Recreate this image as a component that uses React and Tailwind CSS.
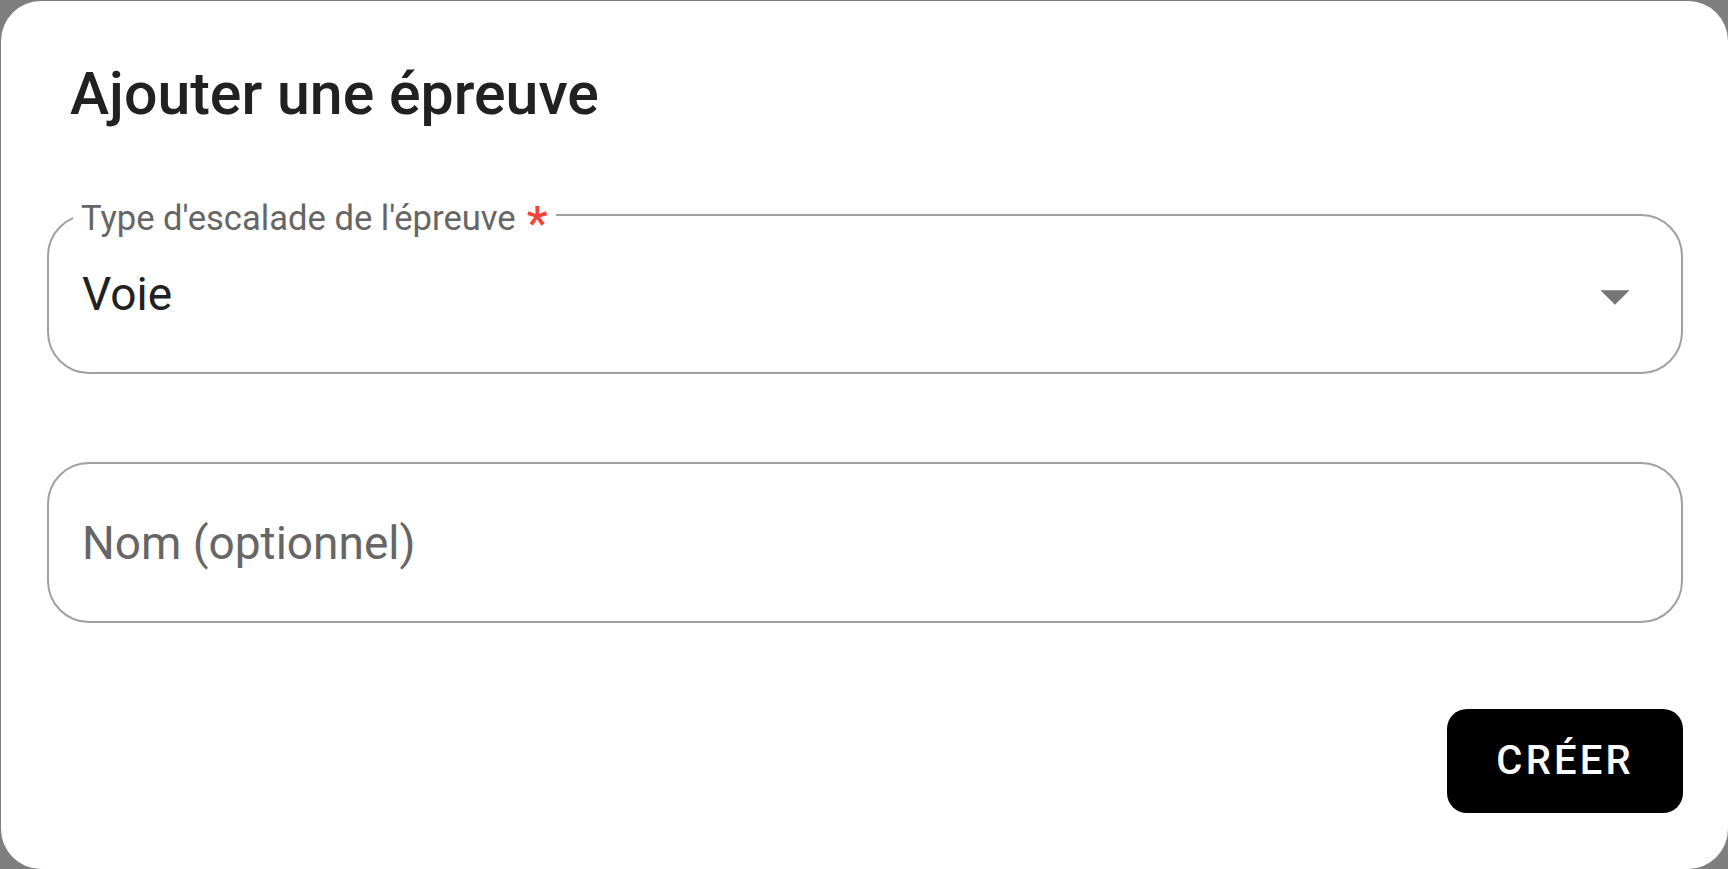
import { useState } from 'react';

function ArrowDrop() {
    return (
        <svg width="70" height="70" viewBox="0 0 24 24" className="shrink-0 text-[#757575] mt-[3px]">
            <path d="M7 10l5 5 5-5z" fill="currentColor" />
        </svg>
    );
}

export default function App() {
    const [name, setName] = useState('');

    return (
        <div className="h-[869px] w-full bg-[#7f7f7f] pt-px pl-px flex font-['Roboto',sans-serif] overflow-hidden">
            <div className="flex-1 bg-white rounded-[40px] flex flex-col pl-[46px] pr-[45px] pt-[63px]">
                <h2 className="text-[59px] leading-none font-medium text-[#212121] pl-[23px]">
                    Ajouter une épreuve
                </h2>

                {/* type d'escalade */}
                <div className="relative mt-[91px] h-[160px] border-2 border-[#a0a0a0] rounded-[42px] flex items-center pl-[33px] pr-[31px]">
                    <span className="absolute left-[24px] -top-[18px] bg-white pl-2 pr-2 text-[34.6px] leading-[40px] text-[#666666]">
                        Type d'escalade de l'épreuve
                        <span className="ml-[11px] text-[#f44336] text-[47px] font-medium align-[-9px] leading-none">*</span>
                    </span>
                    <span className="flex-1 text-[46px] leading-none text-[#212121]">Voie</span>
                    <ArrowDrop />
                </div>

                {/* nom */}
                <div className="mt-[88px] h-[161px] border-2 border-[#a0a0a0] rounded-[42px] flex items-center pl-[33px] pr-[32px]">
                    <input
                        value={name}
                        onChange={(e) => setName(e.target.value)}
                        placeholder="Nom (optionnel)"
                        className="w-full text-[46px] leading-none text-[#212121] placeholder:text-[#666666] outline-none bg-transparent"
                    />
                </div>

                <div className="mt-[86px] flex justify-end">
                    <button className="h-[104px] px-[49px] bg-black text-white rounded-[20px] text-[40px] font-medium tracking-[0.08em] leading-none">
                        CRÉER
                    </button>
                </div>
            </div>
        </div>
    );
}
